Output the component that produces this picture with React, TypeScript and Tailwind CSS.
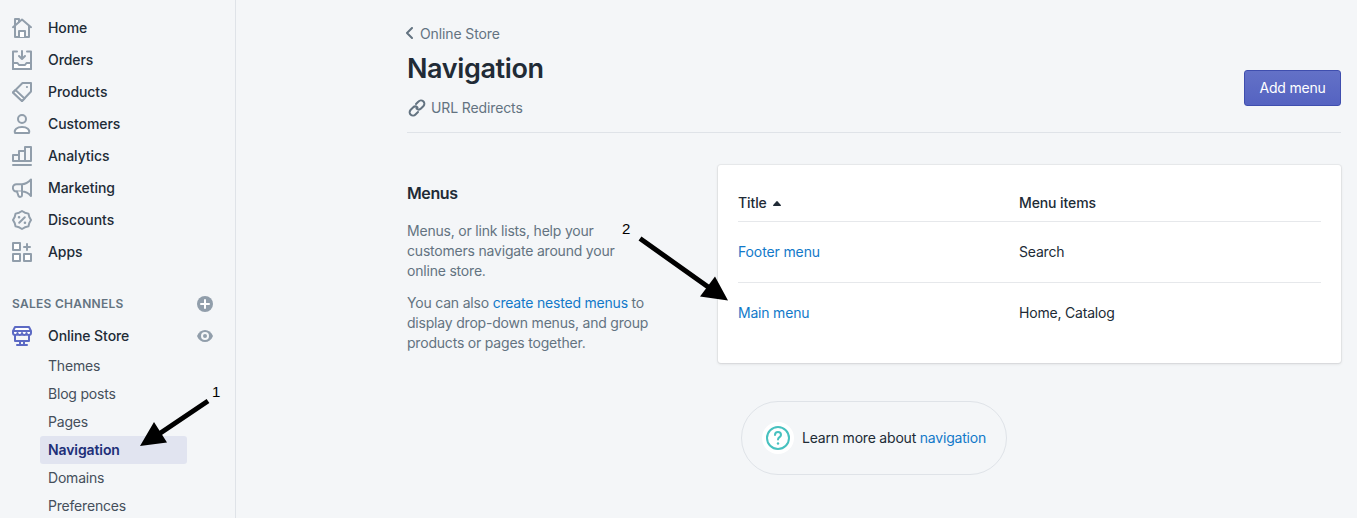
import React from "react";

const stroke = { fill: "none", stroke: "#919eab", strokeWidth: 2, strokeLinejoin: "round" as const, strokeLinecap: "round" as const };

const icons: Record<string, React.ReactNode> = {
  Home: (
    <>
      <path d="M3 8V1h4v2.500" />
      <path d="M1 9.200 10 1.500l9 7.700M3 8v11h14V8" />
      <path d="M7 19v-6h6v6" fill="#fff" />
    </>
  ),
  Orders: (
    <>
      <path d="M1 13h4.500l1.500 2h6l1.500-2H19v6H1z" fill="#fff" />
      <path d="M5 1.500H1V19h18V1.500h-4M10 1v7.500M7 6l3 3 3-3" />
    </>
  ),
  Products: (
    <>
      <path d="M1 10.500 10.500 1H19v8.500l-9 9.500z" />
      <path d="m1 10.500 2.500-2.500 9 8.500L10 19z" fill="#fff" />
      <path d="M14.900 5.100h.1" />
    </>
  ),
  Customers: (
    <>
      <circle cx="10" cy="5" r="4" />
      <path d="M3 19c-1.200-3.500 2-6 7-6s8.200 2.500 7 6z" fill="#fff" />
    </>
  ),
  Analytics: (
    <>
      <path d="M1 9h6v6H1zM7 5h6v10H7zM13 1h6v14h-6zM1 19h18" />
    </>
  ),
  Marketing: (
    <>
      <path d="M10 6.200c4 0 6-1.500 9-4.700v16.500c-3-3.500-5-4.500-9-4.500H4.500a3.650 3.650 0 0 1 0-7.300zM10 6.200v7.300" />
      <path d="M5 13.500 6.500 18c.8 1.500 3.500 1 3.500-.8v-3.700" fill="#fff" />
    </>
  ),
  Discounts: (
    <>
      <path d="m10 1 2.900 1.700 3.500.900.900 3.500L19 10l-1.700 2.900-.9 3.500-3.500.9L10 19l-2.900-1.700-3.500-.9-.9-3.500L1 10l1.700-2.900.9-3.500 3.500-.9z" />
      <path d="m7.200 12.800 5.600-5.600" />
      <path d="M7 7.200h.1M12.900 12.800h.1" strokeWidth="2.500" />
    </>
  ),
  Apps: (
    <>
      <path d="M1 1h7v7H1zM1 12h7v7H1zM12 12h7v7h-7z" fill="#fff" />
      <path d="M15 2v6M12 5h6" />
    </>
  ),
};

const mainItems = ["Home", "Orders", "Products", "Customers", "Analytics", "Marketing", "Discounts", "Apps"];

const subItems = ["Themes", "Blog posts", "Pages", "Navigation", "Domains", "Preferences"];

function Sidebar() {
  return (
    <aside className="h-full w-[236px] shrink-0 overflow-hidden border-r border-[#dfe3e8] pt-3">
      <nav>
        {mainItems.map((label) => (
          <a key={label} className="flex h-8 items-center gap-4 pl-3 font-medium tracking-[-0.07px]">
            <svg className="size-5" viewBox="0 0 20 20" {...stroke}>
              {icons[label]}
            </svg>
            <span>{label}</span>
          </a>
        ))}
      </nav>
      <div className="mt-4 flex h-10 items-center justify-between pr-[22px] pl-3 text-[12px] font-semibold tracking-[0.27px] text-[#637381]">
        <span>SALES CHANNELS</span>
        <svg className="size-4" viewBox="0 0 16 16">
          <circle cx="8" cy="8" r="8" fill="#919eab" />
          <path d="M8 4v8M4 8h8" stroke="#fff" strokeWidth="2" strokeLinecap="round" />
        </svg>
      </div>
      <div className="-mt-1 flex h-8 items-center pr-[22px] pl-3 font-medium tracking-[-0.07px]">
        <svg className="size-5" viewBox="0 0 20 20" fill="none" stroke="#5c6ac4" strokeWidth="2" strokeLinejoin="round" strokeLinecap="round">
          <path d="M3 9v6h14V9M8 15v4M12 15v4M5 19h10" />
          <path d="M3 1h14l2 4v2c0 2.500-4.500 2.500-4.500 0 0 2.500-4.500 2.500-4.500 0 0 2.500-4.500 2.500-4.500 0C5.500 9.500 1 9.500 1 7V5zM1.500 5h17" fill="#fff" />
        </svg>
        <span className="ml-4 grow">Online Store</span>
        <svg className="h-3 w-4" viewBox="0 0 16 12">
          <path d="M0 6c3-8 13-8 16 0-3 8-13 8-16 0z" fill="#919eab" />
          <circle cx="8" cy="6" r="3" fill="none" stroke="#f4f6f8" strokeWidth="2" />
        </svg>
      </div>
      <nav className="pl-10">
        {subItems.map((label) => (
          <a
            key={label}
            className={
              label === "Navigation"
                ? "flex h-7 w-[147px] items-center rounded-[3px] bg-[#e1e4f0] pl-2 font-semibold tracking-[-0.1px] text-[#202e78]"
                : "flex h-7 w-[147px] items-center pl-2 tracking-[-0.2px] text-[#454f5b]"
            }
          >
            {label}
          </a>
        ))}
      </nav>
    </aside>
  );
}

function PageHeader() {
  return (
    <header className="flex h-[133px] items-start justify-between border-b border-[#dfe3e8] text-[#637381]">
      <div>
        <a className="mt-6 flex h-5 items-center tracking-[-0.12px]">
          <svg className="-mt-0.5 -ml-[3px] h-3 w-[9px]" viewBox="0 0 9 12" fill="none" stroke="#637381" strokeWidth="2" strokeLinecap="round" strokeLinejoin="round">
            <path d="M8 1 3 6l5 5" />
          </svg>
          <span className="ml-[7px]">Online Store</span>
        </a>
        <h1 className="mt-[5px] h-10 text-[27px] leading-10 font-semibold tracking-[-0.38px] text-[#212b36]">Navigation</h1>
        <a className="mt-[9px] flex h-5 items-center gap-1 tracking-[-0.12px]">
          <svg className="size-5" viewBox="0 0 20 20" fill="none" stroke="#637381" strokeWidth="2" strokeLinecap="round">
            <path d="m9 6 2.500-2.500a3.200 3.200 0 0 1 5 4.500L14 10.500a3.200 3.200 0 0 1-4.500 0M11 14l-2.500 2.500a3.200 3.200 0 0 1-5-4.500L6 9.500a3.200 3.200 0 0 1 4.500 0" />
          </svg>
          <span>URL Redirects</span>
        </a>
      </div>
      <button className="mt-[70px] h-9 w-[97px] rounded-[3px] border border-[#3f4eae] bg-linear-to-b from-[#6371c7] to-[#5563c1] tracking-[-0.2px] text-white">
        Add menu
      </button>
    </header>
  );
}

function MenuTable() {
  return (
    <div className="mt-8 h-[198px] w-[623px] rounded-[3px] bg-white px-5 pt-5 tracking-[-0.2px] shadow-[0_0_0_1px_rgba(63,63,68,0.05),0_1px_3px_0_rgba(63,63,68,0.15)]">
      <div className="flex h-[37px] items-center border-b border-[#e6e8eb] font-medium tracking-[-0.1px]">
        <div className="flex w-[281px] items-center">
          <span>Title</span>
          <svg className="ml-1.5 h-[5px] w-2" viewBox="0 0 8 5">
            <path d="M3.300.4a1 1 0 0 1 1.400 0L7.800 4c.3.500 0 1-.5 1H.7c-.5 0-.8-.5-.5-1z" fill="#212b36" />
          </svg>
        </div>
        <div>Menu items</div>
      </div>
      <div className="flex h-[61px] items-center border-b border-[#e6e8eb]">
        <a className="w-[281px] tracking-[-0.12px] text-[#1279c9]">Footer menu</a>
        <span>Search</span>
      </div>
      <div className="flex h-[60px] items-center">
        <a className="w-[281px] text-[#1279c9]">Main menu</a>
        <span>Home, Catalog</span>
      </div>
    </div>
  );
}

export default function App() {
  return (
    <div className="relative flex h-[518px] w-[1357px] overflow-hidden bg-[#f4f6f8] font-['Inter',sans-serif] text-[14px] leading-5 text-[#212b36]">
      <Sidebar />
      <main className="grow pr-4 pl-[171px]">
        <PageHeader />
        <div className="flex">
          <section className="w-[311px] pt-[48px] tracking-[-0.2px] text-[#637381]">
            <h2 className="mb-4 text-[16px] leading-6 font-semibold tracking-[-0.4px] text-[#212b36]">Menus</h2>
            <p>
              Menus, or link lists, help your
              <br />
              customers navigate around your
              <br />
              online store.
            </p>
            <p className="mt-3">
              You can also <a className="text-[#1279c9]">create nested menus</a> to
              <br />
              display drop-down menus, and group
              <br />
              products or pages together.
            </p>
          </section>
          <MenuTable />
        </div>
        <div className="mt-[38px] ml-[334px] flex h-[74px] w-[266px] items-center rounded-full border border-[#dfe3e8] pl-5">
          <svg className="size-8" viewBox="0 0 32 32" fill="none">
            <circle cx="16" cy="16" r="16" fill="#fff" />
            <circle cx="16" cy="16" r="11" stroke="#47c1bf" strokeWidth="2" />
            <path d="M13 13c0-4 6-4 6 0 0 2-3 2.300-3 4.500" stroke="#47c1bf" strokeWidth="2" strokeLinecap="round" />
            <circle cx="16" cy="21.500" r="1.200" fill="#47c1bf" />
          </svg>
          <span className="ml-2 tracking-[-0.2px]">
            Learn more about <a className="text-[#1279c9]">navigation</a>
          </span>
        </div>
      </main>
      <svg className="pointer-events-none absolute inset-0 size-full" viewBox="0 0 1357 518">
        <path d="M208 401 156 436M640 238.500 711 289" stroke="#000" strokeWidth="5" />
        <path d="m140 446 14-24 13 20.500zM728 300.500 715 276.500l-15 20z" />
      </svg>
      <span className="absolute top-[382px] left-[212px] font-['Liberation_Sans',sans-serif] text-[15px] text-black">1</span>
      <span className="absolute top-[219px] left-[622px] font-['Liberation_Sans',sans-serif] text-[15px] text-black">2</span>
    </div>
  );
}
